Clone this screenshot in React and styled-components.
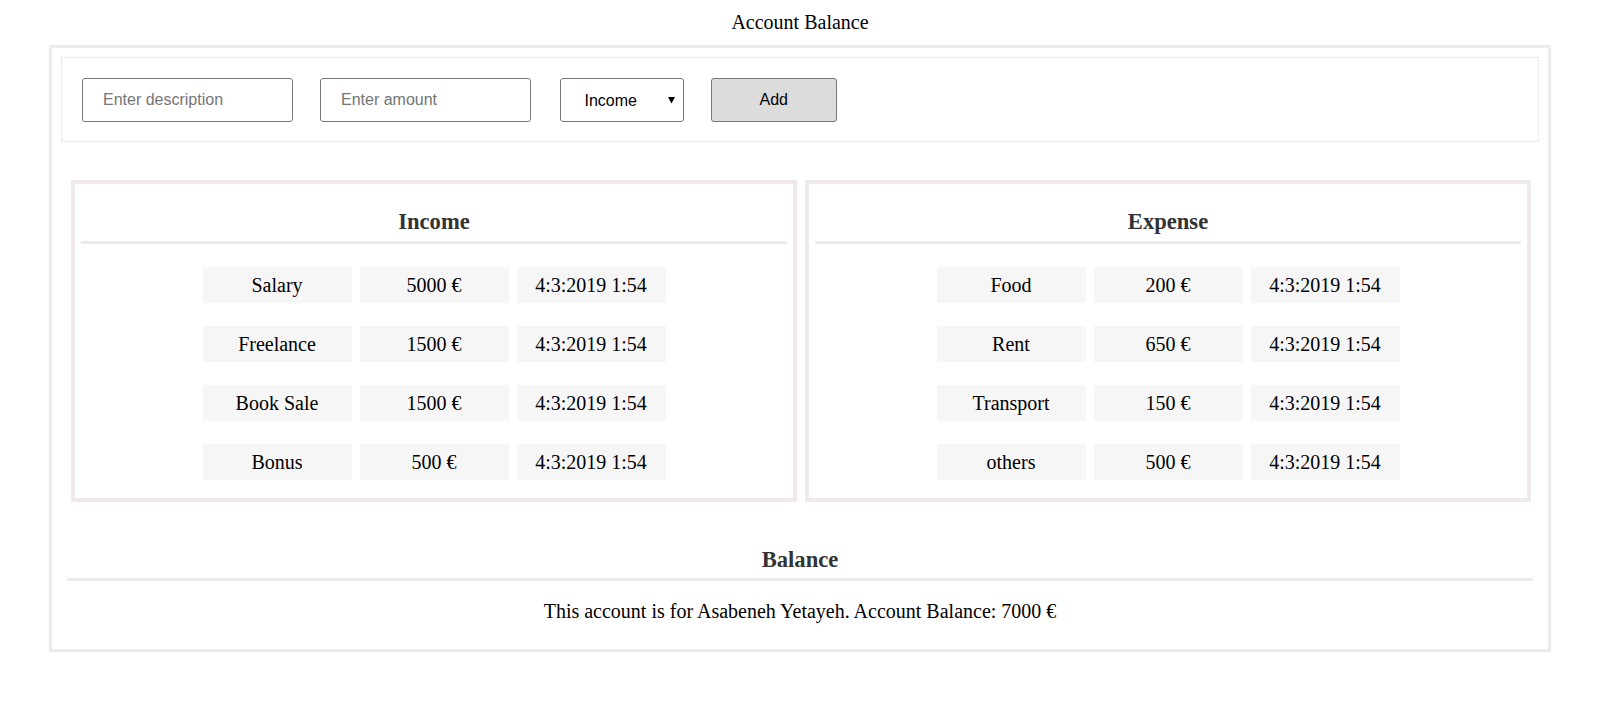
import styled, { createGlobalStyle } from "styled-components";

const incomes = [
    { id: 1, description: "Salary", amount: 5000, date: "4:3:2019 1:54" },
    { id: 2, description: "Freelance", amount: 1500, date: "4:3:2019 1:54" },
    { id: 3, description: "Book Sale", amount: 1500, date: "4:3:2019 1:54" },
    { id: 4, description: "Bonus", amount: 500, date: "4:3:2019 1:54" },
];

const expenses = [
    { id: 1, description: "Food", amount: 200, date: "4:3:2019 1:54" },
    { id: 2, description: "Rent", amount: 650, date: "4:3:2019 1:54" },
    { id: 3, description: "Transport", amount: 150, date: "4:3:2019 1:54" },
    { id: 4, description: "others", amount: 500, date: "4:3:2019 1:54" },
];

const GlobalStyle = createGlobalStyle`
    body {
        margin: 0;
        background: #fff;
        font-family: "Liberation Serif", "Times New Roman", serif;
        color: #000;
    }
`;

const ListCard = ({ title, items }) =>
{
    return (
        <Card>
            <CardHeading>{title}</CardHeading>
            <Rows>
                {
                    items.map((item) => {
                        return (
                            <Row key={item.id}>
                                <Cell>{item.description}</Cell>
                                <Cell>{item.amount} €</Cell>
                                <Cell>{item.date}</Cell>
                            </Row>
                        )
                    })
                }
            </Rows>
        </Card>
    )
}

const App = () =>
{
    const total = incomes.reduce((a, b) => a + b.amount, 0) - expenses.reduce((a, b) => a + b.amount, 0);

    return (
        <>
        <GlobalStyle />
        <Title>Account Balance</Title>
        <Wrapper>
            <Form onSubmit={(e) => e.preventDefault()}>
                <Input type="text" placeholder="Enter description" />
                <Input type="text" placeholder="Enter amount" />
                <SelectBox>
                    <Select defaultValue="income">
                        <option value="income">Income</option>
                        <option value="expense">Expense</option>
                    </Select>
                    <Arrow width="7" height="8" viewBox="0 0 7 8">
                        <polygon points="0,1 7,1 3.5,7.5" fill="#000" />
                    </Arrow>
                </SelectBox>
                <Button type="submit">Add</Button>
            </Form>

            <Cards>
                <ListCard title="Income" items={incomes} />
                <ListCard title="Expense" items={expenses} />
            </Cards>

            <Balance>
                <BalanceHeading>Balance</BalanceHeading>
                <BalanceText>
                    This account is for Asabeneh Yetayeh. Account Balance: {total} €
                </BalanceText>
            </Balance>
        </Wrapper>
        </>
    )
}

const Title = styled.h1`
    margin: 0;
    padding: 11px 0 11px 3px;
    font-size: 20px;
    line-height: 23px;
    font-weight: normal;
    text-align: center;
`

const Wrapper = styled.div`
    margin: 0 46px 0 49px;
    border: 3px solid #ececec;
    padding: 9px;
`

const Form = styled.form`
    display: flex;
    align-items: center;
    gap: 27px;
    padding: 20px 20px 19px;
    border: 1px dotted #d9d9d9;
`

const Input = styled.input`
    box-sizing: border-box;
    width: 211px;
    height: 44px;
    padding: 0 20px;
    border: 1px solid #777;
    border-radius: 3px;
    font-family: "Liberation Sans", Arial, sans-serif;
    font-size: 16px;
    color: #000;
    outline: none;

    &::placeholder {
        color: #757575;
    }
`

const SelectBox = styled.div`
    position: relative;
    width: 124.5px;
    height: 44px;
    margin-left: 1.5px;
`

const Select = styled.select`
    box-sizing: border-box;
    appearance: none;
    width: 100%;
    height: 100%;
    padding: 0 0 0 24px;
    border: 1px solid #777;
    border-radius: 3px;
    background: #fff;
    font-family: "Liberation Sans", Arial, sans-serif;
    font-size: 16px;
    color: #000;
    outline: none;
`

const Arrow = styled.svg`
    position: absolute;
    right: 9px;
    top: 18px;
    pointer-events: none;
`

const Button = styled.button`
    box-sizing: border-box;
    width: 125.5px;
    height: 44px;
    border: 1px solid #777;
    border-radius: 3px;
    background: #dcdcdc;
    font-family: "Liberation Sans", Arial, sans-serif;
    font-size: 16px;
    color: #000;
`

const Cards = styled.div`
    display: flex;
    gap: 8px;
    margin: 38px 8px 0 10px;
`

const Card = styled.section`
    flex: 1;
    border: 4px solid #efe9e9;
    padding: 25px 6px 18px;
`

const CardHeading = styled.h3`
    margin: 0;
    padding-bottom: 6px;
    border-bottom: 3px solid #eeeaea;
    font-size: 22.6px;
    line-height: 26px;
    font-weight: bold;
    color: #333;
    text-align: center;
`

const Rows = styled.div`
    display: flex;
    flex-direction: column;
    align-items: center;
    gap: 23px;
    margin-top: 23px;
`

const Row = styled.div`
    display: flex;
    gap: 8px;
`

const Cell = styled.div`
    width: 149px;
    height: 36px;
    line-height: 36px;
    background: #f6f6f6;
    font-size: 20px;
    text-align: center;
`

const Balance = styled.div`
    margin-top: 45px;
    padding: 0 6px 17px;
`

const BalanceHeading = styled.h3`
    margin: 0;
    padding-bottom: 5px;
    border-bottom: 3px solid #eeeaea;
    font-size: 22.6px;
    line-height: 26px;
    font-weight: bold;
    color: #333;
    text-align: center;
`

const BalanceText = styled.p`
    margin: 19px 0 0;
    font-size: 20px;
    line-height: 23px;
    text-align: center;
`

export default App;
